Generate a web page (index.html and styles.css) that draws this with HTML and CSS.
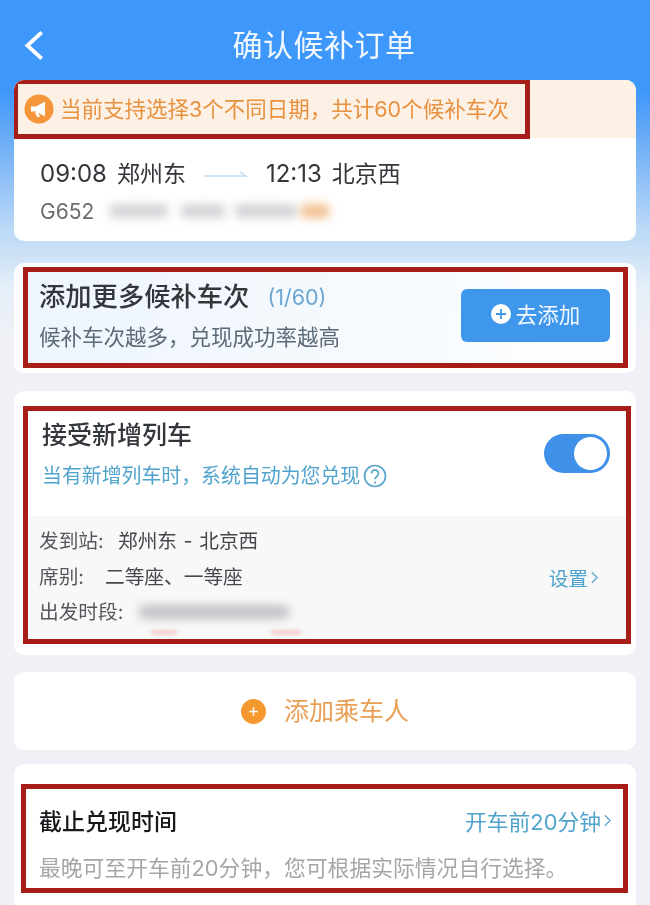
FILE: index.html
```html
<!DOCTYPE html>
<html lang="zh-CN">
<head>
<meta charset="utf-8">
<title>确认候补订单</title>
<link rel="stylesheet" href="styles.css">
</head>
<body>
<div class="page">
  <header class="nav">
    <svg class="back" viewBox="0 0 20 30"><path d="M17 3 4 15l13 12"/></svg>
    <h1>确认候补订单</h1>
  </header>

  <section class="card trip">
    <div class="banner">
      <div class="mark banner-mark">
        <svg class="horn" viewBox="0 0 30 30"><circle cx="15" cy="15" r="14.5" fill="#f5963a"/><path d="M7 12.500h5L21 7.500v15l-9-5H7z" fill="#fff"/><path d="M11 18l2 5h3l-2-5z" fill="#fff"/></svg>
        <span class="banner-text">当前支持选择3个不同日期，共计60个候补车次</span>
      </div>
    </div>
    <div class="trip-body">
      <div class="route">
        <span class="time">09:08</span>
        <span class="station">郑州东</span>
        <svg class="arrow" viewBox="0 0 44 8"><path d="M0 6h42L36 2" /></svg>
        <span class="time">12:13</span>
        <span class="station">北京西</span>
      </div>
      <div class="train">
        <span>G652</span>
        <i class="blur b1"></i><i class="blur b2"></i><i class="blur b3"></i><i class="blur b4"></i>
      </div>
    </div>
  </section>

  <section class="card more">
    <div class="mark more-mark">
      <div class="more-text">
        <div class="more-title"><strong>添加更多候补车次</strong><span>(1/60)</span></div>
        <p>候补车次越多，兑现成功率越高</p>
      </div>
      <div class="add-btn">
        <svg class="plus" viewBox="0 0 20 20"><circle cx="10" cy="10" r="10" fill="#fff"/><path d="M10 5v10M5 10h10" stroke="#3f97ec" stroke-width="1.800"/></svg>
        <span>去添加</span>
      </div>
    </div>
  </section>

  <section class="card fresh">
    <div class="mark fresh-mark">
      <div class="fresh-head">
        <div>
          <h2>接受新增列车</h2>
          <p class="hint">当有新增列车时，系统自动为您兑现<svg class="help" viewBox="0 0 24 24"><circle cx="12" cy="12" r="10.500"/><path d="M8.500 9.500a3.500 3.500 0 1 1 5.600 2.800c-1.300 1-2.100 1.500-2.100 3"/><circle class="dot" cx="12" cy="18.500" r="1.100"/></svg></p>
        </div>
        <div class="toggle"><i></i></div>
      </div>
      <div class="fresh-info">
        <div class="info-list">
          <div class="info-row"><span class="lbl lbl-a">发到站:</span><span class="spaced">郑州东 - 北京西</span></div>
          <div class="info-row"><span class="lbl lbl-b">席别:</span><span>二等座、一等座</span></div>
          <div class="info-row"><span class="lbl lbl-c">出发时段:</span><i class="blur b5"></i></div>
          <i class="smear s1"></i><i class="smear s2"></i>
        </div>
        <div class="setting">设置<svg class="chev" viewBox="0 0 8 14"><path d="m1 1 6 6-6 6"/></svg></div>
      </div>
    </div>
  </section>

  <section class="card passenger">
    <svg class="oplus" viewBox="0 0 24 24"><circle cx="12" cy="12" r="12" fill="#f5982f"/><path d="M12 8v8M8 12h8" stroke="#fff" stroke-width="1.400"/></svg>
    <span>添加乘车人</span>
  </section>

  <section class="card deadline">
    <div class="mark deadline-mark">
      <div class="deadline-row">
        <strong>截止兑现时间</strong>
        <span class="deadline-val">开车前20分钟<svg class="chev" viewBox="0 0 8 14"><path d="m1 1 6 6-6 6"/></svg></span>
      </div>
      <p>最晚可至开车前20分钟，您可根据实际情况自行选择。</p>
    </div>
  </section>
</div>
</body>
</html>
```
FILE: styles.css
```css
* { box-sizing: border-box; }
html, body { margin: 0; height: 100%; }
body {
  overflow: hidden;
  font-family: Inter, "Noto Sans CJK SC", sans-serif;
  background: #eff1f6;
}
.page {
  height: 905px;
  overflow: hidden;
  padding: 0 14px;
  filter: blur(0.4px);
  background: linear-gradient(#3e97fb 0, #3e97fb 90px, #74b1f5 150px, #bcd9f6 230px, #e6eff8 290px, #eff1f6 340px);
}
.nav {
  height: 80px;
  position: relative;
  display: flex;
  align-items: center;
  justify-content: center;
  color: #fff;
}
.nav h1 { margin: 6px 0 0; font-size: 30px; font-weight: 400; letter-spacing: 0.5px; color: #f2f8ff; padding-right: 2px; }
.back { position: absolute; left: 9px; top: 29px; width: 22px; height: 33px; fill: none; stroke: #fff; stroke-width: 3.500; }
.card { background: #fff; border-radius: 10px; }
.mark { border: 5px solid #a71d17; }

.trip { height: 161px; overflow: hidden; }
.banner { height: 59px; background: #fdf0e4; }
.banner-mark {
  width: 517px;
  height: 60px;
  margin: -1px 0 0 -1px;
  padding-left: 6px;
  display: flex;
  align-items: center;
  gap: 6px;
  color: #e8913f;
  font-size: 21.500px;
  white-space: nowrap;
}
.banner-text { margin-top: -4px; }
.horn { width: 30px; height: 30px; flex: none; }
.trip-body { padding: 16px 26px; }
.route { display: flex; align-items: center; font-size: 23px; line-height: 40px; color: #33363b; }
.time { font-size: 24px; margin-right: 10px; }
.arrow { width: 44px; height: 8px; margin: 0 18px 0 18px; fill: none; stroke: #bcdcf3; stroke-width: 1.500; }
.train { display: flex; align-items: center; height: 34px; font-size: 21px; color: #6a6c70; }
.blur { display: block; height: 14px; background: #d4d4d8; filter: blur(5px); border-radius: 4px; }
.b1 { width: 58px; margin-left: 16px; }
.b2 { width: 44px; margin-left: 13px; }
.b3 { width: 62px; margin-left: 10px; }
.b4 { width: 28px; margin-left: 4px; background: #f2c08f; }
.b5 { width: 150px; background: #c4c4c8; }

.more { height: 110px; margin-top: 22px; padding: 4px 8px 5px 9px; }
.more-mark {
  height: 101px;
  padding: 0 13px 0 11px;
  display: flex;
  justify-content: space-between;
  align-items: center;
  background: linear-gradient(100deg, #eef5fd 0, #f6fafe 60%, #fff 100%);
}
.more-text { margin-top: -4px; }
.more-title { display: flex; align-items: center; line-height: 36px; }
.more-title strong { font-size: 26.300px; font-weight: 500; color: #33363b; }
.more-title span { font-size: 21.500px; color: #6aa6d2; margin-left: 18px; }
.more-text p { margin: 7px 0 0; font-size: 21.500px; line-height: 30px; color: #5d6a78; }
.add-btn {
  width: 149px;
  height: 53px;
  margin-top: -5px;
  background: #3f97ec;
  border-radius: 6px;
  display: flex;
  align-items: center;
  justify-content: center;
  gap: 5px;
  padding-bottom: 4px;
  color: #f2f8ff;
  font-size: 21.500px;
}
.plus { width: 20px; height: 20px; margin-top: 2px; }

.fresh { height: 264px; margin-top: 18px; padding: 15px 5px 11px 9px; }
.fresh-mark { height: 238px; display: flex; flex-direction: column; }
.fresh-head {
  height: 105px;
  padding: 6px 16px 0 14px;
  display: flex;
  justify-content: space-between;
  align-items: flex-start;
}
.fresh-head h2 { margin: 0; font-size: 25px; line-height: 36px; font-weight: 500; color: #33363b; }
.hint { margin: 8px 0 0; font-size: 19.900px; line-height: 30px; color: #4fa3cd; display: flex; align-items: center; }
.help { width: 24px; height: 24px; margin-left: 3px; fill: none; stroke: #5aa5cd; stroke-width: 1.700; }
.help .dot { fill: #5aa5cd; stroke: none; }
.toggle { width: 66px; height: 39px; margin-top: 17px; background: #3f90e8; border-radius: 20px; padding: 3px; display: flex; justify-content: flex-end; }
.toggle i { width: 33px; height: 33px; background: #fff; border-radius: 50%; }
.fresh-info {
  flex: 1;
  background: #f8f8f9;
  padding: 5px 26px 0 11px;
  display: flex;
  justify-content: space-between;
  align-items: center;
  color: #44474c;
  font-size: 19.700px;
}
.info-list { position: relative; margin-top: -7px; }
.info-row { display: flex; align-items: center; height: 35.500px; line-height: 36px; }
.lbl { display: block; color: #55585d; }
.lbl-a { width: 79px; }
.lbl-b { width: 66px; }
.lbl-c { width: 100px; }
.spaced { word-spacing: 1px; }
.smear { position: absolute; bottom: -4px; height: 3px; background: #f3b5b0; filter: blur(2px); }
.s1 { left: 112px; width: 26px; }
.s2 { left: 232px; width: 30px; }
.setting { color: #4fa3cd; font-size: 19.700px; display: flex; align-items: center; gap: 3px; margin-top: -5px; margin-right: 2px; }
.chev { width: 7px; height: 13px; fill: none; stroke: #5aa5cd; stroke-width: 1.400; }

.passenger {
  height: 78px;
  margin-top: 17px;
  display: flex;
  align-items: center;
  justify-content: center;
  gap: 18px;
  font-size: 25px;
  color: #ea9f56;
}
.passenger span { margin-top: -4px; }
.oplus { width: 25px; height: 25px; }

.deadline { height: 150px; margin-top: 14px; padding: 20px 8px 0 7px; }
.deadline-mark { height: 109px; padding: 13px 12px 0 13px; }
.deadline-row { display: flex; justify-content: space-between; align-items: center; height: 36px; }
.deadline-row strong { font-size: 23px; font-weight: 500; color: #17191c; }
.deadline-val { color: #4fa3cd; font-size: 21.800px; display: flex; align-items: center; gap: 3px; }
.deadline-mark p { margin: 15px 0 0; font-size: 21.800px; line-height: 30px; color: #a4a6a9; white-space: nowrap; }
```
